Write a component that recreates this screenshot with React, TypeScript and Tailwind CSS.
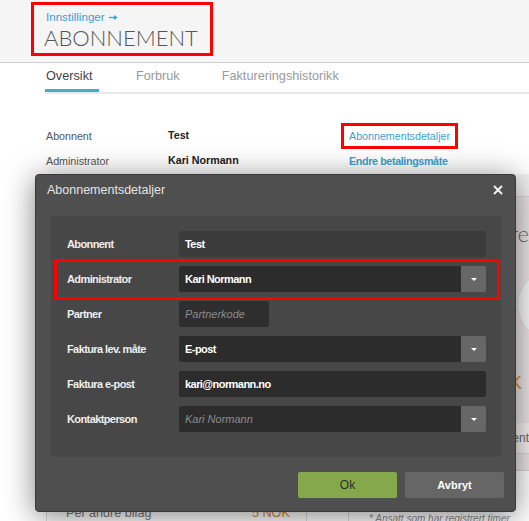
import React from "react";

function Caret() {
  return (
    <div className="w-[25px] h-full bg-[#676767] rounded-r-[2px] flex items-center justify-center">
      <span className="block w-0 h-0 border-x-[3px] border-x-transparent border-t-[3px] border-t-white" />
    </div>
  );
}

function Row({
  label,
  children,
  highlight,
}: {
  label: string;
  children: React.ReactNode;
  highlight?: boolean;
}) {
  return (
    <div className="relative flex items-center h-[26px]">
      <div className="w-[112px] shrink-0 text-[11px] font-bold tracking-[-0.6px] text-[#eeeeee] whitespace-nowrap">{label}</div>
      <div className="flex-1 h-full flex">{children}</div>
      {highlight && (
        <div className="absolute -left-[13px] -right-[14px] -top-[7px] -bottom-[8px] border-[3px] border-[#ff0000]" />
      )}
    </div>
  );
}

const valueCls = "text-[11px] font-bold tracking-[-0.55px] text-white";
const phCls = "text-[11px] italic text-[#8c8c8c]";

export default function App() {
  const hiddenRows = [0, 1, 2, 3, 4, 5, 6, 7, 8, 9];
  return (
    <div className="relative w-[529px] h-[521px] overflow-hidden bg-white font-['Liberation_Sans',Arial,sans-serif]">
      {/* Header */}
      <div className="h-[63px] bg-[#f5f5f5] border-b border-[#cfcfcf] pl-[31px] pt-[2px]">
        <div className="w-[182px] h-[54px] border-[3px] border-[#ff0000] pl-[12px] pt-[5px]">
          <div className="text-[11.6px] leading-[14px] text-[#3a9fd0] flex items-center gap-[4px]">
            <span>Innstillinger</span>
            <svg width="9" height="7" viewBox="0 0 9 7">
              <path d="M0 3.5 H7" stroke="#3a9fd0" strokeWidth="1.3" />
              <path d="M5 1 L8.5 3.5 L5 6 Z" fill="#3a9fd0" />
            </svg>
          </div>
          <div className="mt-[1px] font-['Lato',sans-serif] font-light text-[22px] leading-[26px] text-[#555555] -ml-[2px]">
            ABONNEMENT
          </div>
        </div>
      </div>

      {/* Tabs */}
      <div className="ml-[45px] flex h-[31px] border-b-2 border-[#e9e9e9] text-[12.7px]">
        <div className="w-[54px] pl-[1px] pt-[2px] flex items-center border-b-[3px] border-[#4aa8c8] text-[#444444]">
          Oversikt
        </div>
        <div className="ml-[37px] pt-[2px] flex items-center border-b-[3px] border-transparent text-[#9a9a9a]">
          Forbruk
        </div>
        <div className="ml-[42px] pt-[2px] flex items-center border-b-[3px] border-transparent text-[#9a9a9a]">
          Faktureringshistorikk
        </div>
      </div>

      {/* Info */}
      <div className="ml-[46px] mt-[29px] flex text-[10.7px]">
        <div className="w-[122px] flex flex-col text-[#555555]">
          <div className="h-[26px] flex items-center">Abonnent</div>
          <div className="h-[25px] flex items-center">Administrator</div>
        </div>
        <div className="w-[173px] flex flex-col font-bold text-[#222222]">
          <div className="h-[26px] flex items-center pb-[2px]">Test</div>
          <div className="h-[25px] flex items-center pb-[2px]">Kari Normann</div>
        </div>
        <div className="flex flex-col">
          <div className="h-[26px] w-[117px] border-[3px] border-[#ff0000] flex items-center pl-[5px] text-[#3a9fd0]">
            Abonnementsdetaljer
          </div>
          <div className="h-[25px] flex items-center pl-[8px] font-bold tracking-[-0.35px] text-[#3a9fd0]">
            Endre betalingsmåte
          </div>
        </div>
      </div>

      {/* Content behind the dialog */}
      <div className="ml-[46px] flex">
        <div className="w-[261px] mr-[41px] border-x border-[#dddddd] flex flex-col">
          <div className="h-[24px]" />
          {hiddenRows.map((i) => (
            <div key={i} className="h-[30px] border-t border-[#eeeeee]" />
          ))}
          <div className="h-[30px] flex items-center text-[12.6px]">
            <span className="w-[205px] pl-[19px] text-[#777777]">Per andre bilag</span>
            <span className="text-[#e08a2b]">5 NOK</span>
          </div>
        </div>
        <div className="flex-1 border-l border-[#dddddd] flex flex-col">
          <div className="h-[22px] bg-[#f2f2f2]" />
          <div className="border-y border-[#d6d6d6] bg-[#ebe5e6] pt-[23px] flex flex-col items-end">
            <div className="h-[28px] leading-[28px] font-['Lato',sans-serif] font-light text-[22px] text-[#666666] whitespace-nowrap">
              Brukere
            </div>
            <div className="mt-[22px] -mr-[58px] w-[70px] h-[70px] rounded-full bg-[#f7f7f7] border border-[#dddddd]" />
            <div className="mt-[31px] h-[24px] leading-[24px] pr-[7px] text-[18px] text-[#e08a2b]">NOK</div>
            <div className="mt-[28px] self-stretch h-[31px] bg-[#f4f1f1] border-b border-[#d6d6d6] flex items-center justify-end text-[12px] text-[#666666]">
              klient
            </div>
            <div className="h-[16px]" />
          </div>
          <div className="mt-[40px] pl-[20px] text-[10px] italic text-[#888888] whitespace-nowrap">
            * Ansatt som har registrert timer
          </div>
        </div>
      </div>

      {/* Dialog */}
      <div className="absolute left-[35px] top-[174px] w-[481px] h-[338px] rounded-[4px] bg-[#4f4f4f] border border-[#393939] shadow-[0_4px_30px_rgba(0,0,0,0.5)] flex flex-col">
        <div className="h-[41px] pt-[8px] pl-[11px] pr-[11px] flex justify-between items-start">
          <span className="text-[12.5px] leading-[14px] text-[#e4e4e4]">Abonnementsdetaljer</span>
          <svg width="12" height="14" viewBox="0 0 12 14">
            <path d="M2 3 L10 11 M10 3 L2 11" stroke="#f2f2f2" strokeWidth="2" strokeLinecap="butt" />
          </svg>
        </div>
        <div className="ml-[15px] mr-[14px] h-[241px] bg-[#474747] rounded-[2px] pt-[15px] pl-[16px] pr-[15px] flex flex-col gap-[9px]">
          <Row label="Abonnent">
            <div className={`flex-1 h-full bg-[#3b3b3b] rounded-[2px] pl-[6px] flex items-center ${valueCls}`}>Test</div>
          </Row>
          <Row label="Administrator" highlight>
            <div className={`flex-1 h-full bg-[#2c2c2c] rounded-l-[2px] pl-[6px] flex items-center ${valueCls}`}>
              Kari Normann
            </div>
            <Caret />
          </Row>
          <Row label="Partner">
            <div className={`w-[90px] h-full bg-[#2e2e2e] rounded-[2px] pl-[6px] flex items-center ${phCls}`}>Partnerkode</div>
          </Row>
          <Row label="Faktura lev. måte">
            <div className={`flex-1 h-full bg-[#2c2c2c] rounded-l-[2px] pl-[6px] flex items-center ${valueCls}`}>E-post</div>
            <Caret />
          </Row>
          <Row label="Faktura e-post">
            <div className={`flex-1 h-full bg-[#2c2c2c] rounded-[2px] pl-[6px] flex items-center ${valueCls}`}>
              kari@normann.no
            </div>
          </Row>
          <Row label="Kontaktperson">
            <div className={`flex-1 h-full bg-[#2c2c2c] rounded-l-[2px] pl-[6px] flex items-center ${phCls}`}>
              Kari Normann
            </div>
            <Caret />
          </Row>
        </div>
        <div className="mt-[15px] pr-[11px] flex justify-end gap-[8px]">
          <button className="w-[99px] h-[26px] rounded-[2px] bg-[#84a84a] text-[12px] text-[#2e2e2e]">Ok</button>
          <button className="w-[99px] h-[26px] rounded-[2px] bg-[#666666] text-[11px] font-bold text-white">Avbryt</button>
        </div>
      </div>
    </div>
  );
}
